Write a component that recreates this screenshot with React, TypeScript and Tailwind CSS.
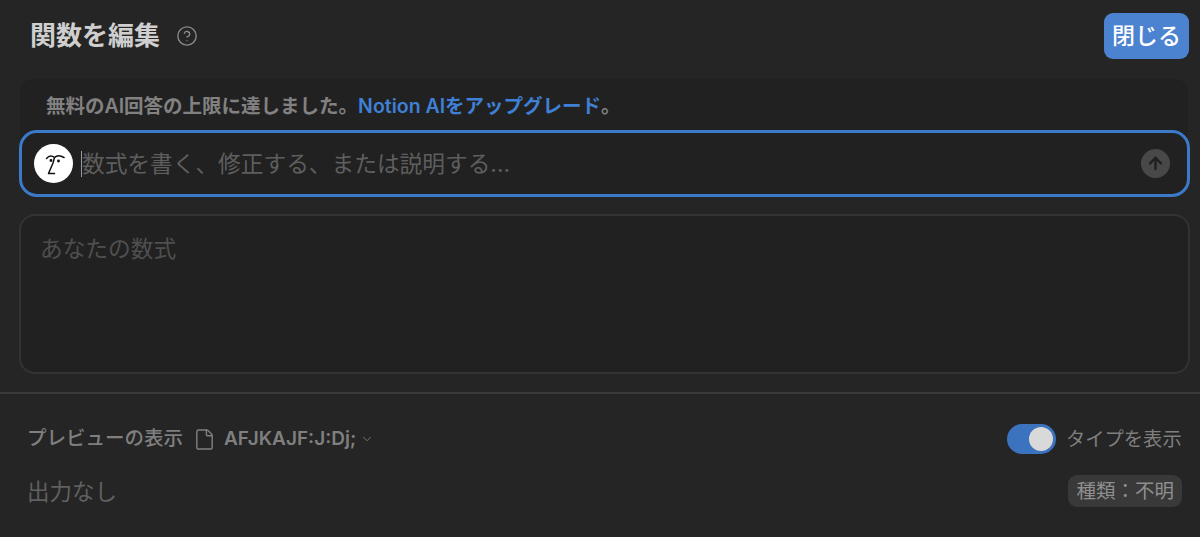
import React from 'react';
import { ArrowUp, ChevronDown, CircleHelp, File } from 'lucide-react';

const font = "font-['Inter','Noto_Sans_CJK_JP',sans-serif]";

export default function App() {
  return (
    <div className={`h-[537px] w-[1200px] overflow-hidden bg-[#252525] text-[#7f7f7f] ${font}`}>
      {/* Header */}
      <div className="flex h-[79px] items-start justify-between pl-[30px] pr-[11px] pt-[13px]">
        <div className="flex h-[46px] items-center gap-[16px]">
          <h1 className="text-[26px] leading-none font-bold text-[#cfcfcf]">関数を編集</h1>
          <CircleHelp size={22} strokeWidth={1.5} className="text-[#8a8a8a]" />
        </div>
        <button className="flex h-[46px] w-[85px] items-center justify-center rounded-[9px] bg-[#4b83d1] text-[23px] font-medium text-white">
          閉じる
        </button>
      </div>

      {/* AI box */}
      <div className="ml-[20px] mr-[12px] rounded-[14px] bg-[#212121]">
        <p className="flex h-[51px] items-center pl-[26px] pt-[5px] text-[19.5px] leading-none font-semibold text-[#818181]">
          無料のAI回答の上限に達しました。<span className="text-[#3f80d6]">Notion AIをアップグレード</span>。
        </p>
        <div className="-ml-px -mr-[2px] flex h-[67px] items-center rounded-[18px] border-[3px] border-[#3b79c9] bg-[#212121] pl-[12px] pr-[17px]">
          <div className="flex h-[39px] w-[39px] shrink-0 items-center justify-center rounded-full bg-white">
            <svg width="24" height="26" viewBox="0 0 24 26" fill="none" stroke="#111" strokeWidth="1.5" strokeLinecap="round" strokeLinejoin="round">
              <path d="M4.5 7.5 C7 4.5 10 4.5 12.5 6.5 C15 4 18 4 22 6.5" />
              <path d="M12.5 6.5 L11 12 L6.5 22.5 L12.5 22.5" />
              <circle cx="9" cy="9.5" r="0.7" fill="#111" />
              <circle cx="16.5" cy="10" r="0.7" fill="#111" />
            </svg>
          </div>
          <div className="ml-[8px] h-[26px] w-px bg-[#9a9a9a]" />
          <span className="flex-1 pt-[2px] text-[22.7px] leading-none text-[#5e5e5e]">数式を書く、修正する、または説明する...</span>
          <div className="flex h-[29px] w-[29px] items-center justify-center rounded-full bg-[#484848]">
            <ArrowUp size={19} strokeWidth={3} className="text-[#1f1f1f]" />
          </div>
        </div>
      </div>

      {/* Formula area */}
      <div className="ml-[19px] mr-[10px] mt-[17px] h-[160px] rounded-[16px] border-2 border-[#333333] bg-[#212121] px-[19px] pt-[18px] text-[22.7px] leading-[30px] text-[#4f4f4f]">
        あなたの数式
      </div>

      {/* Preview */}
      <div className="mt-[18px] border-t-2 border-[#3a3a3a] pl-[27px] pr-[18px] pt-[14px]">
        <div className="flex h-[62px] items-center justify-between">
          <div className="flex items-center text-[19.5px] font-medium">
            <span>プレビューの表示</span>
            <File size={23} strokeWidth={1.5} className="ml-[10px]" />
            <span className="ml-[8px] text-[19px] font-semibold">AFJKAJF:J:Dj;</span>
            <ChevronDown size={14} strokeWidth={1.5} className="ml-[4px]" />
          </div>
          <div className="flex items-center">
            <div className="flex h-[30px] w-[49px] items-center justify-end rounded-full bg-[#3b73bf] pr-[3px]">
              <div className="h-[24px] w-[24px] rounded-full bg-[#d9d9d9]" />
            </div>
            <span className="ml-[10px] w-[116px] whitespace-nowrap text-[19.3px]">タイプを表示</span>
          </div>
        </div>
        <div className="mt-[5px] flex items-center justify-between">
          <span className="pt-[3px] text-[22.5px] leading-none text-[#606060]">出力なし</span>
          <span className="flex h-[32px] items-center rounded-[9px] bg-[#393939] pl-[8px] pr-[8px] pt-[2px] text-[19.5px] text-[#8f8f8f]">種類：不明</span>
        </div>
      </div>
    </div>
  );
}
